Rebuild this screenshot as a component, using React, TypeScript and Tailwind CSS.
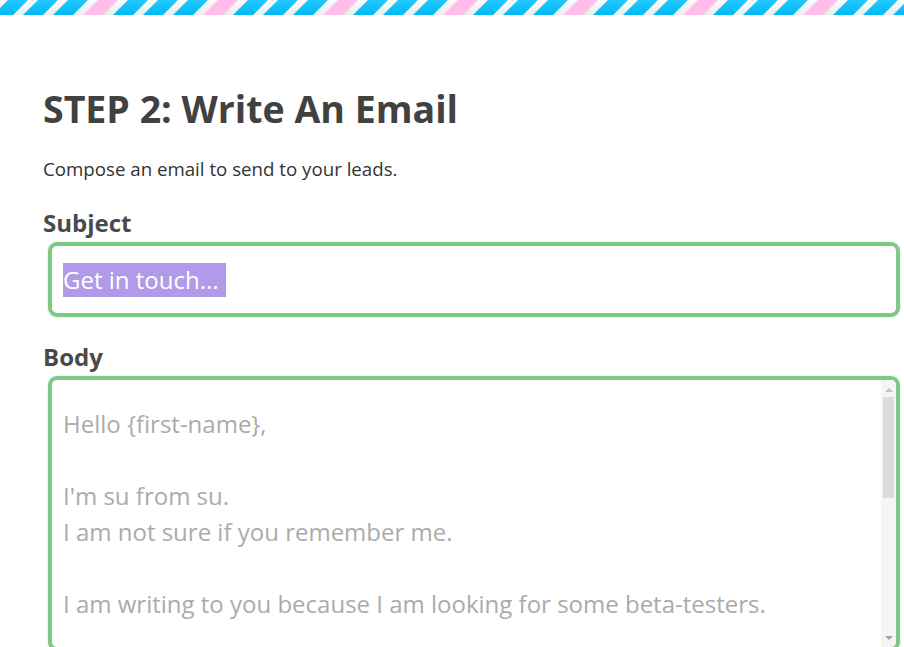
function StripeBar() {
  return (
    <svg className="block w-full h-[15px]" xmlns="http://www.w3.org/2000/svg">
      <defs>
        <linearGradient id="blueFill" x1="0" y1="0" x2="0" y2="1">
          <stop offset="0" stopColor="#22c8fd" />
          <stop offset="1" stopColor="#00b8f1" />
        </linearGradient>
        <linearGradient id="whiteFill" x1="0" y1="0" x2="0" y2="1">
          <stop offset="0" stopColor="#fbfbfb" />
          <stop offset="1" stopColor="#ececec" />
        </linearGradient>
        <pattern id="stripes" x="8" y="0" width="120" height="15" patternUnits="userSpaceOnUse" patternTransform="skewX(-45)">
          <rect x="0" y="0" width="120" height="15" fill="url(#whiteFill)" />
          <rect x="0" y="0" width="20" height="15" fill="url(#blueFill)" />
          <rect x="30" y="0" width="20" height="15" fill="url(#blueFill)" />
          <rect x="60" y="0" width="20" height="15" fill="url(#blueFill)" />
          <rect x="90" y="0" width="20" height="15" fill="#ffbde7" />
        </pattern>
      </defs>
      <rect width="100%" height="15" fill="url(#stripes)" />
    </svg>
  );
}

const bodyLines = [
  "Hello {first-name},",
  "",
  "I'm su from su.",
  "I am not sure if you remember me.",
  "",
  "I am writing to you because I am looking for some beta-testers.",
];

export default function App() {
  return (
    <div className="h-[647px] overflow-hidden bg-white font-['Open_Sans',_sans-serif]">
      <StripeBar />
      <div className="pl-[43px] pr-[4px] pt-[70px]">
        <h1 className="text-[37.5px] leading-[48px] font-bold text-[#414141]">STEP 2: Write An Email</h1>
        <p className="mt-[23px] text-[18.7px] leading-[26px] text-[#333]">Compose an email to send to your leads.</p>

        <h2 className="mt-[25px] text-[24px] leading-[32px] font-bold text-[#4a4a4a]">Subject</h2>
        <div className="ml-[5px] mt-[3px] h-[75px] rounded-[9px] border-4 border-[#7fc987] shadow-[0_0_2px_rgba(120,180,220,0.5)] pl-[11px] pt-[17px]">
          <span className="bg-[#b19be8] text-white text-[24px] leading-[34px] pr-[7px] inline-block">Get in touch...</span>
        </div>

        <h2 className="mt-[24px] text-[24px] leading-[32px] font-bold text-[#4a4a4a]">Body</h2>
        <div className="relative ml-[5px] mt-[3px] h-[275px] rounded-[9px] border-4 border-[#7fc987] shadow-[0_0_2px_rgba(120,180,220,0.5)] pl-[11px] pt-[26px] overflow-hidden">
          {bodyLines.map((line, i) => (
            <div key={i} className="text-[24px] leading-[36px] h-[36px] text-[#ababab] whitespace-pre">
              {line}
            </div>
          ))}
          {/* scrollbar */}
          <div className="absolute right-0 top-0 bottom-0 w-[15px] bg-[#f5f5f5] flex flex-col items-center">
            <div className="mt-[8px] w-0 h-0 border-l-[4px] border-r-[4px] border-b-[4px] border-l-transparent border-r-transparent border-b-[#c3c3c3]" />
            <div className="mt-[5px] w-[11px] h-[101px] bg-[#dcdcdc]" />
            <div className="mt-auto mb-[7px] w-0 h-0 border-l-[4px] border-r-[4px] border-t-[4px] border-l-transparent border-r-transparent border-t-[#a3a3a3]" />
          </div>
        </div>
      </div>
    </div>
  );
}
